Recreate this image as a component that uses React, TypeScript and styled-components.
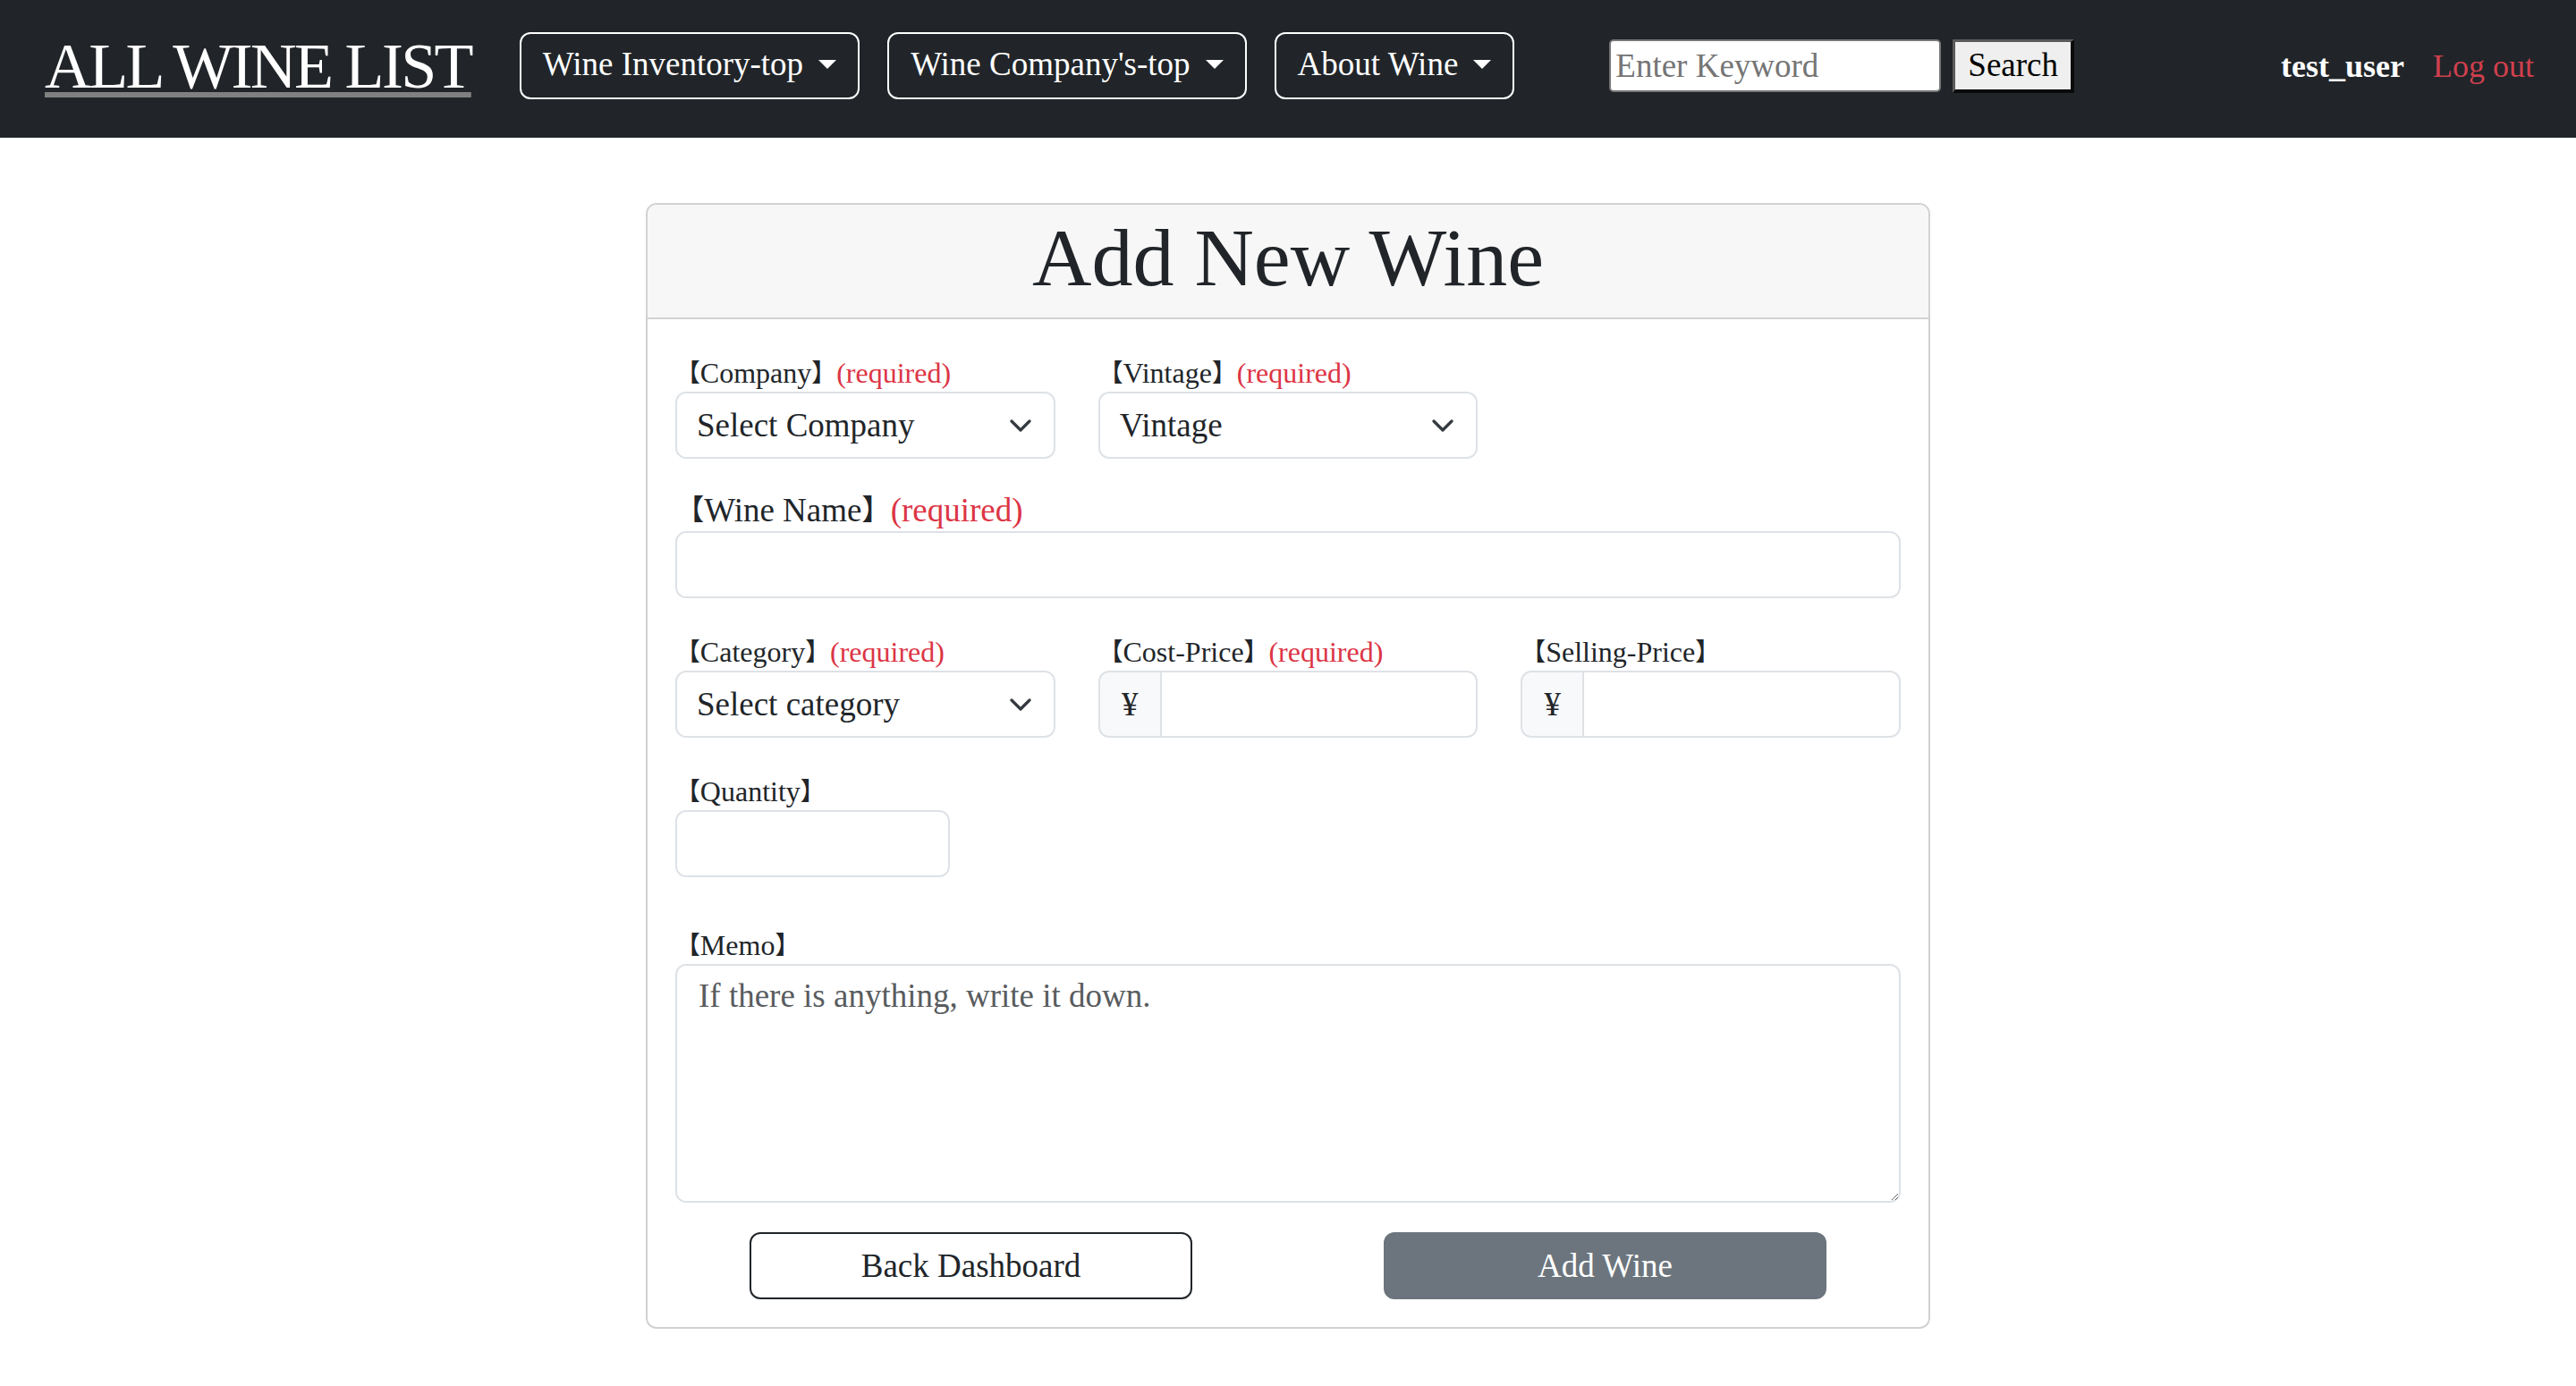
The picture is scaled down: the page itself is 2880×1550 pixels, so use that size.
import React from "react";
import styled, { createGlobalStyle, css } from "styled-components";

const GlobalStyle = createGlobalStyle`
  html, body { margin: 0; padding: 0; background: #ffffff; }
  body {
    font-family: "Liberation Serif", "Noto Sans CJK JP", serif;
    color: #212529;
  }
  *, *::before, *::after { box-sizing: border-box; }
`;

const NavBar = styled.nav`
  height: 154px;
  background: #212529;
  display: flex;
  align-items: center;
  padding: 0 47px 7px 50px;
`;

const Brand = styled.a`
  font-size: 72px;
  line-height: 80px;
  letter-spacing: -2.7px;
  color: #ffffff;
  white-space: nowrap;
  text-decoration: underline;
  text-decoration-color: #808080;
  text-decoration-thickness: 6px;
  text-underline-offset: 5px;
  margin-right: 54px;
  cursor: pointer;
`;

const NavMenu = styled.div`
  display: flex;
  align-items: center;
  gap: 31px;
`;

const NavDropdown = styled.button`
  display: inline-flex;
  align-items: center;
  height: 75px;
  padding: 0 24px 3px;
  border: 2px solid #ffffff;
  border-radius: 12px;
  background: transparent;
  color: #ffffff;
  font-family: inherit;
  font-size: 37px;
  line-height: 48px;
  white-space: nowrap;
  cursor: pointer;

  &::after {
    content: "";
    margin-left: 17px;
    border-top: 10px solid #ffffff;
    border-left: 10px solid transparent;
    border-right: 10px solid transparent;
  }
`;

const SearchForm = styled.form`
  display: flex;
  align-items: center;
  gap: 13px;
  margin-left: 106px;
`;

const SearchInput = styled.input`
  width: 371px;
  height: 59px;
  border: 2px solid #767676;
  border-radius: 5px;
  padding: 0 5px;
  font-family: inherit;
  font-size: 37px;
  color: #000;
  background: #ffffff;

  &::placeholder {
    color: #757575;
  }
`;

const SearchButton = styled.button`
  height: 60px;
  padding: 0 14px 2px;
  background: #efefef;
  border-style: solid;
  border-width: 3px 4px 4px 3px;
  border-color: #5b5b5b #0a0a0a #0a0a0a #5b5b5b;
  font-family: inherit;
  font-size: 37px;
  color: #000;
  cursor: pointer;
`;

const UserArea = styled.div`
  margin-left: auto;
  display: flex;
  align-items: baseline;
  gap: 32px;
  font-size: 36px;
`;

const UserName = styled.span`
  color: #ffffff;
  font-weight: 700;
`;

const LogoutLink = styled.a`
  color: #d0404e;
  text-decoration: none;
  cursor: pointer;
`;

const Card = styled.section`
  width: 1436px;
  margin: 73px auto 0;
  border: 2px solid #d2d2d2;
  border-radius: 12px;
  overflow: hidden;
  background: #ffffff;
`;

const CardHeader = styled.header`
  height: 128px;
  padding-bottom: 8px;
  background: #f7f7f7;
  border-bottom: 2px solid #d2d2d2;
  text-align: center;
`;

const Title = styled.h1`
  margin: 0;
  font-size: 92px;
  font-weight: 400;
  line-height: 118px;
  color: #212529;
`;

const CardBody = styled.form`
  padding: 0 31px 31px;
`;

const FormRow = styled.div<{ $cols: number; $top: number }>`
  display: grid;
  grid-template-columns: repeat(${(p) => p.$cols}, 1fr);
  column-gap: 48px;
  margin-top: ${(p) => p.$top}px;
`;

const Field = styled.div`
  display: flex;
  flex-direction: column;
  min-width: 0;
`;

const Label = styled.label<{ $large?: boolean }>`
  display: flex;
  align-items: center;
  height: ${(p) => (p.$large ? 48 : 42)}px;
  font-size: ${(p) => (p.$large ? 37 : 32)}px;
  line-height: 1;
  color: #212529;
  white-space: nowrap;
`;

const Bracket = styled.span`
  font-size: 0.87em;
`;

const Required = styled.span`
  color: #dc3545;
`;

const controlBase = css`
  height: 75px;
  border: 2px solid #dee2e6;
  border-radius: 12px;
  font-family: inherit;
  font-size: 37px;
  color: #212529;
  background: #ffffff;
`;

const TextInput = styled.input`
  ${controlBase};
  display: block;
  width: 100%;
  padding: 0 24px;
  outline: none;
`;

const SelectBox = styled.div`
  ${controlBase};
  display: flex;
  align-items: center;
  padding: 0 25px 0 0;
`;

const SelectEl = styled.select`
  appearance: none;
  flex: 1;
  min-width: 0;
  height: 100%;
  border: none;
  background: transparent;
  padding: 0 0 0 22px;
  font: inherit;
  color: inherit;
  outline: none;
  cursor: pointer;
`;

const InputGroup = styled.div`
  display: flex;
  height: 75px;
`;

const Addon = styled.span`
  width: 71px;
  height: 75px;
  display: flex;
  align-items: center;
  justify-content: center;
  background: #f8f9fa;
  border: 2px solid #dee2e6;
  border-radius: 12px 0 0 12px;
  font-size: 37px;
  color: #212529;
`;

const GroupInput = styled.input`
  ${controlBase};
  flex: 1;
  min-width: 0;
  border-left: none;
  border-radius: 0 12px 12px 0;
  padding: 0 24px;
  outline: none;
`;

const MemoArea = styled.textarea`
  ${controlBase};
  display: block;
  width: 100%;
  height: 267px;
  padding: 10px 24px;
  line-height: 48px;
  outline: none;

  &::placeholder {
    color: #595c5f;
  }
`;

const ButtonCell = styled.div`
  display: flex;
  justify-content: center;
`;

const ActionButton = styled.button<{ $variant: "outline" | "secondary" }>`
  width: 75%;
  height: 75px;
  border-radius: 12px;
  font-family: inherit;
  font-size: 37px;
  cursor: pointer;
  ${(p) =>
    p.$variant === "outline"
      ? css`
          background: #ffffff;
          color: #212529;
          border: 2px solid #212529;
        `
      : css`
          background: #6c757d;
          color: #ffffff;
          border: 2px solid #6c757d;
        `}
`;

const Chevron = () => (
  <svg width="24" height="14" viewBox="0 0 24 14" aria-hidden="true">
    <path
      d="M2 2 L12 12 L22 2"
      fill="none"
      stroke="#343a40"
      strokeWidth="3.2"
      strokeLinecap="round"
      strokeLinejoin="round"
    />
  </svg>
);

const FieldLabel = ({
  text,
  required,
  large,
}: {
  text: string;
  required?: boolean;
  large?: boolean;
}) => (
  <Label $large={large}>
    <Bracket>【</Bracket>
    {text}
    <Bracket>】</Bracket>
    {required && <Required>(required)</Required>}
  </Label>
);

const Select = ({ placeholder }: { placeholder: string }) => (
  <SelectBox>
    <SelectEl defaultValue="">
      <option value="">{placeholder}</option>
    </SelectEl>
    <Chevron />
  </SelectBox>
);

const YenInput = () => (
  <InputGroup>
    <Addon>¥</Addon>
    <GroupInput type="text" />
  </InputGroup>
);

export default function App() {
  return (
    <>
      <GlobalStyle />
      <NavBar>
        <Brand>ALL WINE LIST</Brand>
        <NavMenu>
          <NavDropdown type="button">Wine Inventory-top</NavDropdown>
          <NavDropdown type="button">Wine Company's-top</NavDropdown>
          <NavDropdown type="button">About Wine</NavDropdown>
        </NavMenu>
        <SearchForm onSubmit={(e) => e.preventDefault()}>
          <SearchInput type="text" placeholder="Enter Keyword" />
          <SearchButton type="submit">Search</SearchButton>
        </SearchForm>
        <UserArea>
          <UserName>test_user</UserName>
          <LogoutLink>Log out</LogoutLink>
        </UserArea>
      </NavBar>

      <Card>
        <CardHeader>
          <Title>Add New Wine</Title>
        </CardHeader>
        <CardBody onSubmit={(e) => e.preventDefault()}>
          <FormRow $cols={3} $top={39}>
            <Field>
              <FieldLabel text="Company" required />
              <Select placeholder="Select Company" />
            </Field>
            <Field>
              <FieldLabel text="Vintage" required />
              <Select placeholder="Vintage" />
            </Field>
          </FormRow>

          <FormRow $cols={1} $top={33}>
            <Field>
              <FieldLabel text="Wine Name" required large />
              <TextInput type="text" />
            </Field>
          </FormRow>

          <FormRow $cols={3} $top={39}>
            <Field>
              <FieldLabel text="Category" required />
              <Select placeholder="Select category" />
            </Field>
            <Field>
              <FieldLabel text="Cost-Price" required />
              <YenInput />
            </Field>
            <Field>
              <FieldLabel text="Selling-Price" />
              <YenInput />
            </Field>
          </FormRow>

          <FormRow $cols={4} $top={39}>
            <Field>
              <FieldLabel text="Quantity" />
              <TextInput type="number" />
            </Field>
          </FormRow>

          <FormRow $cols={1} $top={55}>
            <Field>
              <FieldLabel text="Memo" />
              <MemoArea placeholder="If there is anything, write it down." />
            </Field>
          </FormRow>

          <FormRow $cols={2} $top={33}>
            <ButtonCell>
              <ActionButton type="button" $variant="outline">
                Back Dashboard
              </ActionButton>
            </ButtonCell>
            <ButtonCell>
              <ActionButton type="submit" $variant="secondary">
                Add Wine
              </ActionButton>
            </ButtonCell>
          </FormRow>
        </CardBody>
      </Card>
    </>
  );
}
